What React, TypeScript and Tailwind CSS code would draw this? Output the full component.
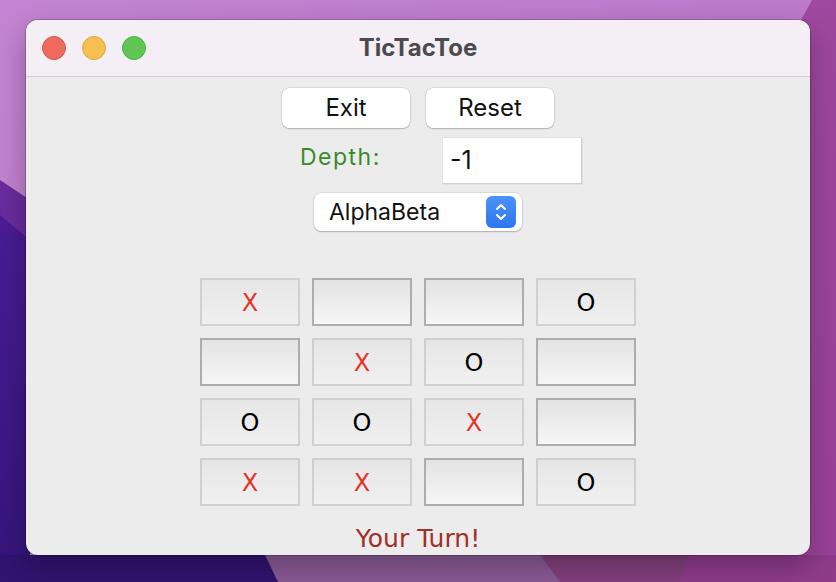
import React from 'react';

type Mark = 'X' | 'O' | '';

const board: Mark[][] = [
  ['X', '', '', 'O'],
  ['', 'X', 'O', ''],
  ['O', 'O', 'X', ''],
  ['X', 'X', '', 'O'],
];

const Wallpaper: React.FC = () => (
  <svg className="absolute inset-0" width="836" height="582" viewBox="0 0 836 582">
    <defs>
      <linearGradient id="top" x1="0" y1="0" x2="1" y2="1">
        <stop offset="0" stopColor="#c585d4" />
        <stop offset="1" stopColor="#b470c6" />
      </linearGradient>
      <linearGradient id="deep" x1="0" y1="0" x2="0" y2="1">
        <stop offset="0" stopColor="#4a1c96" />
        <stop offset="1" stopColor="#35157a" />
      </linearGradient>
      <linearGradient id="mag" x1="0" y1="0" x2="1" y2="1">
        <stop offset="0" stopColor="#a24ea4" />
        <stop offset="1" stopColor="#9a3f98" />
      </linearGradient>
    </defs>
    <rect width="836" height="582" fill="url(#top)" />
    <polygon points="780,582 836,582 836,0 812,0 790,40" fill="url(#mag)" />
    <polygon points="0,180 30,200 30,582 0,582" fill="#6a2c9e" />
    <polygon points="0,215 30,240 30,582 0,582" fill="url(#deep)" />
    <polygon points="0,555 270,555 290,582 0,582" fill="#301470" />
    <polygon points="265,555 560,555 580,582 278,582" fill="#8a5a96" />
    <polygon points="540,555 820,555 836,582 560,582" fill="#84407e" />
    <polygon points="690,555 836,555 836,582 680,582" fill="#8e3c8a" />
  </svg>
);

const Cell: React.FC<{ mark: Mark }> = ({ mark }) => (
  <div
    className={`w-[100px] h-[48px] flex items-center justify-center border-2 text-[24px] leading-none ${
      mark
        ? 'border-[#d0d0d0] bg-[linear-gradient(#e6e6e6,#f0f0f0)]'
        : 'border-[#adadad] bg-[linear-gradient(#e3e3e3,#f6f6f6)]'
    } ${mark === 'X' ? 'text-[#e8321f]' : 'text-black'}`}
    style={{ fontFamily: '"DejaVu Sans", sans-serif' }}
  >
    <span className="pt-[2px]">{mark}</span>
  </div>
);

export default function App() {
  return (
    <div className="relative w-[836px] h-[582px] overflow-hidden pt-[20px] pl-[26px] font-['Inter','Liberation_Sans',sans-serif]">
      <Wallpaper />
      <div className="relative w-[784px] h-[535px] rounded-[12px] overflow-hidden bg-[#ececec] shadow-[0_0_0_1px_rgba(0,0,0,0.18),0_10px_30px_rgba(0,0,0,0.3)] flex flex-col">
        <div className="h-[57px] shrink-0 bg-[#f3eff5] border-b border-[#d2ced3] flex items-center relative">
          <div className="flex gap-[16px] pl-[16px]">
            <div className="w-[24px] h-[24px] rounded-full bg-[#ee6a5f] border border-[#d9544a]" />
            <div className="w-[24px] h-[24px] rounded-full bg-[#f6c050] border border-[#dea73c]" />
            <div className="w-[24px] h-[24px] rounded-full bg-[#61c554] border border-[#4fad43]" />
          </div>
          <div className="absolute inset-0 flex items-center justify-center text-[24px] font-bold text-[#4b4a4d]">
            TicTacToe
          </div>
        </div>

        <div className="flex flex-col items-center pt-[11px]">
          <div className="flex gap-[16px]">
            <button className="w-[128px] h-[40px] bg-white rounded-[7px] shadow-[0_0_0_0.5px_rgba(0,0,0,0.15),0_1px_1.5px_rgba(0,0,0,0.2)] text-[24px] text-[#111]">
              Exit
            </button>
            <button className="w-[128px] h-[40px] bg-white rounded-[7px] shadow-[0_0_0_0.5px_rgba(0,0,0,0.15),0_1px_1.5px_rgba(0,0,0,0.2)] text-[24px] text-[#111]">
              Reset
            </button>
          </div>

          <div className="flex items-center ml-[46px] mt-[10px] w-[282px]">
            <span className="w-[143px] pb-[8px] text-[23px] tracking-[1.5px] text-[#3a8a2c]">Depth:</span>
            <div className="w-[139px] h-[46px] bg-white border-b border-r border-[#cfcfcf] shadow-[0_0_0_0.5px_rgba(0,0,0,0.08)] flex items-center pl-[7px] text-[25px] text-[#111]">
              -1
            </div>
          </div>

          <div className="mt-[9px] w-[208px] h-[38px] bg-white rounded-[7px] shadow-[0_0_0_0.5px_rgba(0,0,0,0.15),0_1px_1.5px_rgba(0,0,0,0.2)] flex items-center justify-between pl-[15px] pr-[6px]">
            <span className="text-[23px] text-[#111]">AlphaBeta</span>
            <div className="w-[30px] h-[32px] rounded-[6px] bg-[linear-gradient(#4a93f8,#2f76ee)] flex items-center justify-center">
              <svg width="14" height="22" viewBox="0 0 14 22" fill="none" stroke="white" strokeWidth="2" strokeLinecap="round" strokeLinejoin="round">
                <path d="M3 8 L7 4 L11 8" />
                <path d="M3 14 L7 18 L11 14" />
              </svg>
            </div>
          </div>

          <div className="mt-[47px] grid grid-cols-[repeat(4,100px)] gap-[12px]">
            {board.flat().map((m, i) => (
              <Cell key={i} mark={m} />
            ))}
          </div>

          <div
            className="mt-[14px] text-[25px] text-[#a0302a]"
            style={{ fontFamily: '"DejaVu Sans", sans-serif' }}
          >
            Your Turn!
          </div>
        </div>
      </div>
    </div>
  );
}
